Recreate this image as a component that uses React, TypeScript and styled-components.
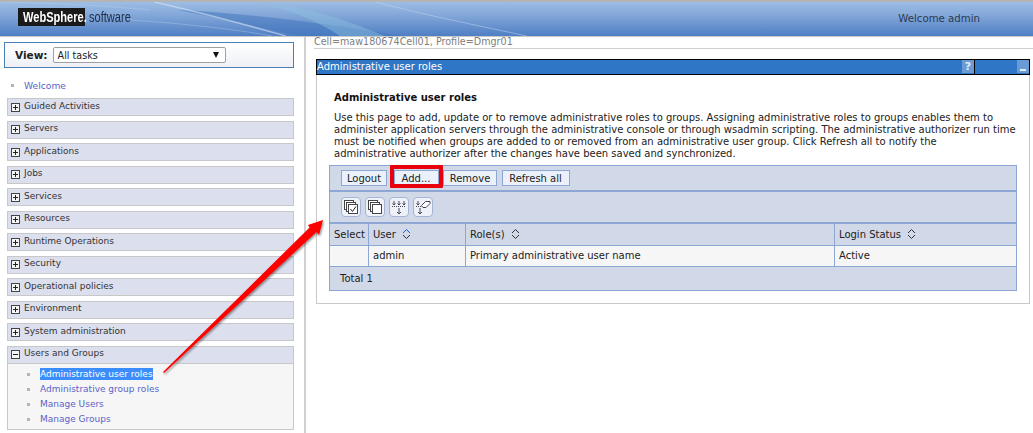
import React from "react";
import styled, {createGlobalStyle} from "styled-components";

const navTop = ["Guided Activities", "Servers", "Applications", "Jobs", "Services", "Resources", "Runtime Operations", "Security", "Operational policies", "Environment", "System administration"]
const subLinks = ["Administrative user roles", "Administrative group roles", "Manage Users", "Manage Groups"]

const GlobalStyle = createGlobalStyle`
    html, body {
        margin: 0;
        padding: 0;
        background: #fff;
        overflow: hidden;
    }
    body {
        font-family: "DejaVu Sans", Verdana, sans-serif;
        font-size: 10px;
        color: #222;
    }
`

const Page = styled.div`
    position: relative;
    width: 1033px;
    height: 433px;
    overflow: hidden;
`

const Header = styled.header`
    position: relative;
    box-sizing: border-box;
    height: 37px;
    padding: 0 53px 0 18px;
    display: flex;
    align-items: center;
    justify-content: space-between;
    border-top: 2px solid #b4b4b4;
    border-bottom: 1px solid #c8c8c8;
    background: linear-gradient(180deg, #9dbde4 0%, #7ea3d6 45%, #4f7fc4 100%);
    overflow: hidden;
`

const Swoosh = styled.svg`
    position: absolute;
    left: 0;
    top: -2px;
    width: 1033px;
    height: 36px;
`

const Brand = styled.div`
    position: relative;
    display: flex;
    align-items: center;
    margin-top: -4px;
    font-family: "Liberation Sans", Arial, sans-serif;
`

const BrandMark = styled.span`
    box-sizing: border-box;
    width: 67px;
    height: 18px;
    padding-left: 5px;
    background: #1a1a1a;
    color: #fff;
    font-weight: 700;
    font-size: 14px;
    line-height: 18px;
    white-space: nowrap;
`

const BrandWord = styled.span`
    padding-left: 4px;
    color: #20304a;
    font-size: 14px;
    line-height: 18px;
`

const Squeezed = styled.span`
    display: inline-block;
    transform: scaleX(0.79);
    transform-origin: 0 50%;
`

const Welcome = styled.div`
    position: relative;
    color: #2b3a55;
    font-size: 10.2px;
    margin-top: -1px;
`

const Body = styled.div`
    display: flex;
    height: 396px;
`

const Sidebar = styled.nav`
    box-sizing: border-box;
    width: 306px;
    flex: none;
    padding: 5px 0 0 4px;
    border-right: 2px solid #d0d0d0;
`

const ViewBox = styled.div`
    box-sizing: border-box;
    width: 290px;
    height: 26px;
    display: flex;
    align-items: center;
    gap: 5px;
    padding: 0 0 0 10px;
    border: 1px solid #4a7fb5;
    background: linear-gradient(180deg, #ffffff 0%, #eef0f6 100%);
    font-size: 10.5px;
    font-weight: 700;
`

const ViewSelect = styled.div`
    box-sizing: border-box;
    width: 173px;
    height: 16px;
    display: flex;
    align-items: center;
    justify-content: space-between;
    padding: 0 6px 0 4px;
    border: 1px solid #a0a0a0;
    border-radius: 2px;
    background: #fff;
    font-weight: 400;
    font-size: 9.6px;
`

const SelectCaret = styled.span`
    width: 0;
    height: 0;
    border-left: 3px solid transparent;
    border-right: 3px solid transparent;
    border-top: 6px solid #111;
`

const NavList = styled.div`
    width: 287px;
    margin-left: 3px;
    display: flex;
    flex-direction: column;
    gap: 4.5px;
`

const Bullet = styled.span`
    width: 3px;
    height: 3px;
    flex: none;
    background: #b4b4b4;
`

const WelcomeRow = styled.div`
    display: flex;
    align-items: center;
    gap: 10px;
    height: 13px;
    margin: 11px 0 6px 7px;
    color: #5a63c8;
    font-size: 9.2px;
`

const NavItem = styled.div`
    box-sizing: border-box;
    height: 18px;
    display: flex;
    align-items: center;
    gap: 4px;
    padding: 0 0 3px 3px;
    border: 1px solid #c8c8c8;
    background: #dcdfee;
    font-size: 9px;
    color: #333;
`

const Toggle = styled.span`
    box-sizing: border-box;
    position: relative;
    width: 9px;
    height: 9px;
    flex: none;
    margin-top: 3px;
    border: 1px solid #444;
    background: #f4f4f4;

    &::before {
        content: "";
        position: absolute;
        left: 1px;
        right: 1px;
        top: 3px;
        height: 1px;
        background: #222;
    }
`

const PlusToggle = styled(Toggle)`
    &::after {
        content: "";
        position: absolute;
        top: 1px;
        bottom: 1px;
        left: 3px;
        width: 1px;
        background: #222;
    }
`

const Group = styled.div`
    border: 1px solid #c8c8c8;
    border-top: none;
    background: #f6f6f6;
    height: 83px;
`

const GroupHead = styled(NavItem)`
    margin: 0 -1px;
`

const SubList = styled.div`
    display: flex;
    flex-direction: column;
    padding: 3px 0 0 19px;
`

const SubRow = styled.div`
    display: flex;
    align-items: center;
    gap: 10px;
    height: 15px;
    font-size: 9px;
`

const SubLink = styled.span<{ $active?: boolean }>`
    line-height: 12px;
    background: ${p => p.$active ? "#3b8dfb" : "transparent"};
    color: ${p => p.$active ? "#fff" : "#5a63c8"};
`

const Main = styled.main`
    flex: 1;
    min-width: 0;
    padding: 0 0 0 8px;
`

const CellLine = styled.div`
    height: 11px;
    line-height: 9px;
    border-bottom: 1px solid #d0d0d0;
    color: #808080;
    font-size: 9.6px;
`

const Panel = styled.section`
    box-sizing: border-box;
    width: 714px;
    height: 245px;
    margin: 10px 0 0 2px;
    border: 1px solid #c8c8c8;
    border-top: none;
`

const TitleBar = styled.div`
    box-sizing: border-box;
    height: 16px;
    margin: 0 -1px;
    display: flex;
    border: 1px solid #000;
    background: #3076c6;
    color: #fff;
    font-size: 10px;
    line-height: 13px;
`

const TitleText = styled.div`
    flex: 1;
    display: flex;
    justify-content: space-between;
    border-right: 1px solid #000;
`

const TitleTail = styled.div`
    width: 54px;
    display: flex;
    justify-content: flex-end;
`

const TitleButton = styled.span`
    width: 12px;
    height: 13px;
    background: #6a9bd4;
    color: #e4eef9;
    font-size: 11px;
    font-weight: 700;
    line-height: 13px;
    text-align: center;
`

const MinimizeMark = styled.span`
    display: block;
    width: 6px;
    height: 2px;
    margin: 9px auto 0;
    background: #e4eef9;
`

const PanelBody = styled.div`
    padding: 17px 12px 0 12px;
`

const Heading = styled.h1`
    margin: -1px 0 8px 5px;
    font-size: 10px;
    line-height: 13px;
    font-weight: 700;
    color: #111;
`

const Description = styled.p`
    margin: 0 0 5px 5px;
    font-size: 10px;
    line-height: 12px;
    color: #222;
`

const Table = styled.div`
    box-sizing: border-box;
    width: 688px;
    border: 1px solid #8da6d4;
    background: #d1d8e8;
`

const Toolbar = styled.div`
    box-sizing: border-box;
    height: 26px;
    display: flex;
    align-items: center;
    gap: 4.5px;
    padding: 0 0 0 11px;
    border-bottom: 2px solid #8da6d4;
`

const ActionButton = styled.button<{ $width: number, $marked?: boolean }>`
    position: relative;
    box-sizing: border-box;
    width: ${p => p.$width}px;
    height: 16px;
    padding: 0;
    margin-left: ${p => p.$marked ? "2px" : "0"};
    border: 1px solid #8da6d4;
    background: #eaf1fb;
    color: #222;
    font-family: inherit;
    font-size: 10px;
    line-height: 13px;

    ${p => p.$marked && `
        &::after {
            content: "";
            position: absolute;
            top: -6px;
            bottom: -3px;
            left: -5px;
            right: -5px;
            border: 4px solid #e8000d;
            border-radius: 1px;
        }
    `}
`

const IconBar = styled.div`
    box-sizing: border-box;
    height: 32px;
    display: flex;
    align-items: center;
    gap: 4px;
    padding: 0 0 0 11px;
    border-bottom: 2px solid #8da6d4;
`

const IconButton = styled.span`
    box-sizing: border-box;
    width: 20px;
    height: 20px;
    display: flex;
    align-items: center;
    justify-content: center;
    border: 1px solid #a4b4d4;
    border-radius: 4px;
    background: #eef2f8;
`

const Row = styled.div`
    display: grid;
    grid-template-columns: 39px 97px 369px 1fr;
`

const HeadRow = styled(Row)`
    height: 21px;
    border-bottom: 1px solid #8da6d4;
`

const DataRow = styled(Row)`
    height: 20px;
    background: #f6f6f6;
    border-bottom: 1px solid #8da6d4;
`

const Cell = styled.div`
    display: flex;
    align-items: center;
    gap: 6px;
    padding: 0 0 1px 4px;
    border-right: 1px solid #8da6d4;
    font-size: 10px;
    color: #222;

    &:last-child {
        border-right: none;
    }
`

const TotalRow = styled.div`
    height: 22px;
    display: flex;
    align-items: center;
    padding: 0 0 1px 10px;
    font-size: 10px;
`

const Annotation = styled.svg`
    position: absolute;
    left: 0;
    top: 0;
    width: 1033px;
    height: 433px;
    pointer-events: none;
`

const SortIcon = ({up}: { up?: boolean }) => (
    <svg width="9" height="12" viewBox="0 0 9 12" fill="none">
        <path d="M1 5 L4.5 1.5 L8 5" stroke={up ? "#1560c8" : "#333"} strokeWidth="1"/>
        <path d="M1 7 L4.5 10.5 L8 7" stroke="#333" strokeWidth="1"/>
    </svg>
)

const PagesIcon = ({check}: { check?: boolean }) => (
    <svg width="16" height="16" viewBox="0 0 16 16" fill="#fff" stroke="#444" strokeWidth="1">
        <rect x="1.5" y="1.5" width="9" height="9"/>
        <rect x="3.5" y="3.5" width="9" height="9"/>
        <rect x="5.5" y="5.5" width="9" height="9"/>
        {check && <path d="M7.5 10 L9.5 12.5 L13 7.5" fill="none" stroke="#222"/>}
    </svg>
)

const FilterIcon = () => (
    <svg width="16" height="16" viewBox="0 0 16 16" fill="none" stroke="#445" strokeWidth="1">
        <path d="M1 7.5 H15" strokeDasharray="1 1"/>
        <path d="M3 2 V6 M1.5 4.5 L3 6 L4.5 4.5 M8 2 V6 M6.5 4.5 L8 6 L9.5 4.5 M13 2 V6 M11.5 4.5 L13 6 L14.5 4.5"/>
        <path d="M8 9 V15 M6 13 L8 15 L10 13"/>
    </svg>
)

const EraseIcon = () => (
    <svg width="16" height="16" viewBox="0 0 16 16" fill="none" stroke="#445" strokeWidth="1">
        <path d="M1 7.5 H7" strokeDasharray="1 1"/>
        <path d="M3 2 V6 M1.5 4.5 L3 6 L4.5 4.5"/>
        <path d="M6.5 6.5 L10.5 2.5 H15 V4.5 L11 8.5 H8 Z" fill="#fff"/>
        <path d="M5 9 V15 M3 13 L5 15 L7 13"/>
    </svg>
)

export default function App() {
    return (
        <Page>
            <GlobalStyle/>
            <Header>
                <Swoosh viewBox="0 0 1033 36" fill="none">
                    <path d="M178 10 C 260 14, 340 26, 400 36 L 300 36 C 260 28, 220 18, 178 10 Z" fill="#3f73bb" opacity="0.5"/>
                    <path d="M260 3 C 310 6, 350 22, 385 36 L 340 36 C 320 22, 290 10, 260 3 Z" fill="#8fc0de" opacity="0.45"/>
                    <path d="M154 2 C 200 12, 250 26, 286 36" stroke="#d6e3f4" strokeWidth="1.5" opacity="0.6"/>
                    <path d="M368 0 C 420 14, 480 26, 527 36" stroke="#c4d6ee" strokeWidth="1" opacity="0.5"/>
                    <path d="M0 2 C 50 3, 110 6, 150 10" stroke="#c4d6ee" strokeWidth="1" opacity="0.35"/>
                    <path d="M130 20 C 190 24, 240 30, 272 36" stroke="#c4d6ee" strokeWidth="1" opacity="0.35"/>
                </Swoosh>
                <Brand>
                    <BrandMark><Squeezed>WebSphere.</Squeezed></BrandMark>
                    <BrandWord><Squeezed>software</Squeezed></BrandWord>
                </Brand>
                <Welcome>Welcome admin</Welcome>
            </Header>
            <Body>
                <Sidebar>
                    <ViewBox>
                        View:
                        <ViewSelect>All tasks<SelectCaret/></ViewSelect>
                    </ViewBox>
                    <WelcomeRow><Bullet/>Welcome</WelcomeRow>
                    <NavList>
                        {navTop.map(item => (
                            <NavItem key={item}><PlusToggle/>{item}</NavItem>
                        ))}
                        <Group>
                            <GroupHead><Toggle/>Users and Groups</GroupHead>
                            <SubList>
                                {subLinks.map((link, i) => (
                                    <SubRow key={link}><Bullet/><SubLink $active={i === 0}>{link}</SubLink></SubRow>
                                ))}
                            </SubList>
                        </Group>
                    </NavList>
                </Sidebar>
                <Main>
                    <CellLine>Cell=maw180674Cell01, Profile=Dmgr01</CellLine>
                    <Panel>
                        <TitleBar>
                            <TitleText>
                                Administrative user roles
                                <TitleButton>?</TitleButton>
                            </TitleText>
                            <TitleTail><TitleButton><MinimizeMark/></TitleButton></TitleTail>
                        </TitleBar>
                        <PanelBody>
                            <Heading>Administrative user roles</Heading>
                            <Description>
                                Use this page to add, update or to remove administrative roles to groups. Assigning administrative roles to groups enables them to<br/>
                                administer application servers through the administrative console or through wsadmin scripting. The administrative authorizer run time<br/>
                                must be notified when groups are added to or removed from an administrative user group. Click Refresh all to notify the<br/>
                                administrative authorizer after the changes have been saved and synchronized.
                            </Description>
                            <Table>
                                <Toolbar>
                                    <ActionButton $width={46}>Logout</ActionButton>
                                    <ActionButton $width={45} $marked>Add...</ActionButton>
                                    <ActionButton $width={54}>Remove</ActionButton>
                                    <ActionButton $width={68}>Refresh all</ActionButton>
                                </Toolbar>
                                <IconBar>
                                    <IconButton><PagesIcon check/></IconButton>
                                    <IconButton><PagesIcon/></IconButton>
                                    <IconButton><FilterIcon/></IconButton>
                                    <IconButton><EraseIcon/></IconButton>
                                </IconBar>
                                <HeadRow>
                                    <Cell>Select</Cell>
                                    <Cell>User <SortIcon up/></Cell>
                                    <Cell>Role(s) <SortIcon/></Cell>
                                    <Cell>Login Status <SortIcon/></Cell>
                                </HeadRow>
                                <DataRow>
                                    <Cell/>
                                    <Cell>admin</Cell>
                                    <Cell>Primary administrative user name</Cell>
                                    <Cell>Active</Cell>
                                </DataRow>
                                <TotalRow>Total 1</TotalRow>
                            </Table>
                        </PanelBody>
                    </Panel>
                </Main>
            </Body>
            <Annotation viewBox="0 0 1033 433">
                <defs>
                    <filter id="arrowShadow" x="-10%" y="-10%" width="120%" height="120%">
                        <feDropShadow dx="1" dy="1.5" stdDeviation="1.2" floodColor="#000" floodOpacity="0.45"/>
                    </filter>
                </defs>
                <path d="M163 372 L309.6 227.5 L308 225 L323 220 L319 235 L316.5 232 L164 373 Z" fill="#f00" filter="url(#arrowShadow)"/>
            </Annotation>
        </Page>
    )
}
